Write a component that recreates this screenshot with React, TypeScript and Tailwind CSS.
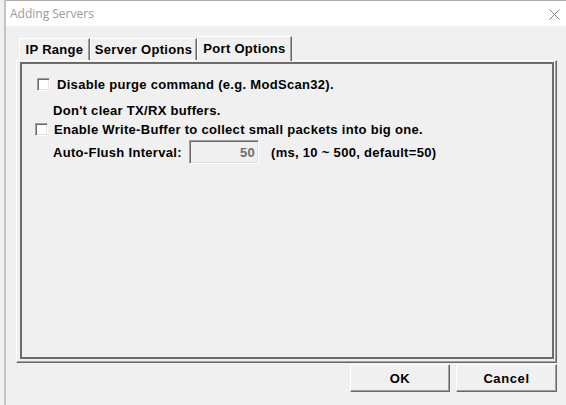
import React from "react";

const font = { fontFamily: '"Liberation Sans", Arial, sans-serif' };

function Checkbox() {
  return (
    <span className="inline-block w-[13px] h-[13px] shrink-0 bg-white border border-t-[#a0a0a0] border-l-[#a0a0a0] border-r-white border-b-white shadow-[inset_1px_1px_0_#696969,inset_-1px_-1px_0_#e3e3e3]" />
  );
}

function Tab({ label, width, active }: { label: string; width: number; active?: boolean }) {
  return (
    <div
      style={{ width }}
      className={
        active
          ? "relative z-10 -mb-px h-[25px] flex items-center justify-center bg-[#f0f0f0] border-t border-l border-r border-t-white border-l-white border-r-[#696969] shadow-[inset_-1px_0_0_#a0a0a0] pb-[1px]"
          : "h-[22px] flex items-center justify-center bg-[#f0f0f0] border-t border-l border-r border-t-white border-l-white border-r-[#696969] shadow-[inset_-1px_0_0_#a0a0a0]"
      }
    >
      {label}
    </div>
  );
}

function Button({ label, width }: { label: string; width: number }) {
  return (
    <button
      style={{ width }}
      className="h-[28px] flex items-center justify-center tracking-[0.6px] bg-[#f0f0f0] border border-t-white border-l-white border-r-[#696969] border-b-[#696969] shadow-[inset_-1px_-1px_0_#a0a0a0]"
    >
      {label}
    </button>
  );
}

export default function App() {
  return (
    <div
      className="w-[566px] h-[405px] flex bg-[#f0f0f0] overflow-hidden text-[13px] font-bold text-black leading-[15px] tracking-[0.3px]"
      style={font}
    >
      {/* background app peeking out on the left */}
      <div className="w-[4px] shrink-0 bg-[#f0f0f0]" />

      {/* dialog window */}
      <div className="flex-1 flex flex-col border-l-2 border-[#c4c4c4]">
        {/* title bar */}
        <div className="h-[26px] shrink-0 bg-white border-t border-[#ababab] flex items-center justify-between pl-[4px] pr-[6px]">
          <span
            className="text-[12px] font-normal tracking-normal text-[#9a9a9a]"
            style={{ fontFamily: '"Open Sans", "Noto Sans", sans-serif' }}
          >
            Adding Servers
          </span>
          <svg width="11" height="11" viewBox="0 0 11 11" className="mt-[1px]">
            <path d="M0.5 0.5 L10.5 10.5 M10.5 0.5 L0.5 10.5" stroke="#808080" strokeWidth="1" />
          </svg>
        </div>

        {/* body */}
        <div className="flex-1 pl-[10px] pt-[10px]">
          {/* tabs */}
          <div className="flex items-end pl-[3px] h-[24px]">
            <Tab label="IP Range" width={71} />
            <Tab label="Server Options" width={107} />
            <Tab label="Port Options" width={95} active />
          </div>

          {/* tab panel */}
          <div className="w-[541px] h-[303px] border border-t-white border-l-white border-r-[#696969] border-b-[#696969] shadow-[inset_-1px_-1px_0_#a0a0a0] pl-[3px] pt-[1px] pr-[2px] pb-[3px]">
            <div className="w-full h-full border-2 border-[#6c6c6c] pl-[13px] pt-[13px]">
              <div className="flex items-center gap-[7px] ml-[2px]">
                <Checkbox />
                <span>Disable purge command (e.g. ModScan32).</span>
              </div>
              <div className="ml-[18px] mt-[11px]">Don't clear TX/RX buffers.</div>
              <div className="flex items-center gap-[6px] mt-[4px]">
                <Checkbox />
                <span>Enable Write-Buffer to collect small packets into big one.</span>
              </div>
              <div className="flex items-center ml-[18px] mt-[3px]">
                <span className="w-[136px]">Auto-Flush Interval:</span>
                <div className="w-[70px] h-[24px] flex items-center justify-end pr-[3px] bg-[#f0f0f0] border border-t-[#a0a0a0] border-l-[#a0a0a0] border-r-white border-b-white shadow-[inset_1px_1px_0_#696969,inset_-1px_-1px_0_#e3e3e3] text-[#6d6d6d]">
                  50
                </div>
                <span className="ml-[12px]">(ms, 10 ~ 500, default=50)</span>
              </div>
            </div>
          </div>

          {/* buttons */}
          <div className="w-[541px] flex justify-end gap-[6px] mt-[1px]">
            <Button label="OK" width={100} />
            <Button label="Cancel" width={101} />
          </div>
        </div>
      </div>
    </div>
  );
}
